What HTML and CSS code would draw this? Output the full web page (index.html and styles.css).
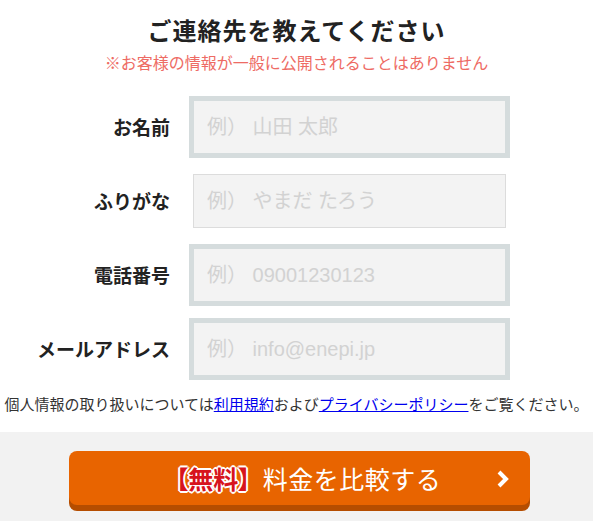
FILE: index.html
```
<!DOCTYPE HTML>
<html>
<head>
    <meta http-equiv="Content-Type" content="text/html;charset=UTF-8">
    <title>ご連絡先</title>
    <link rel="stylesheet" href="styles.css">
</head>
<body>
<div class="main">
    <h1 class="title">ご連絡先を教えてください</h1>
    <p class="note">※お客様の情報が一般に公開されることはありません</p>
    <div class="rows">
        <div class="row">
            <label class="label">お名前</label>
            <input class="field ring" type="text" placeholder="例） 山田 太郎">
        </div>
        <div class="row">
            <label class="label">ふりがな</label>
            <input class="field" type="text" placeholder="例） やまだ たろう">
        </div>
        <div class="row">
            <label class="label">電話番号</label>
            <input class="field ring" type="text" placeholder="例） 09001230123">
        </div>
        <div class="row">
            <label class="label">メールアドレス</label>
            <input class="field ring" type="text" placeholder="例） info@enepi.jp">
        </div>
    </div>
    <p class="policy">個人情報の取り扱いについては<a href="#">利用規約</a>および<a href="#">プライバシーポリシー</a>をご覧ください。</p>
    <div class="band">
        <div class="btn">
            <span class="free">【無料】</span><span class="btntext">料金を比較する</span>
            <svg class="arrow" width="14" height="20" viewBox="0 0 14 20">
                <polyline points="3,3 10,10 3,17" fill="none" stroke="#fff" stroke-width="4"/>
            </svg>
        </div>
    </div>
</div>
</body>
</html>
```

FILE: styles.css
```
* {
    margin: 0;
    padding: 0;
    box-sizing: border-box;
}

body {
    font-family: "Liberation Sans", "Noto Sans CJK JP", sans-serif;
    color: #222;
    background: #fff;
}

.main {
    width: 593px;
    height: 521px;
    overflow: hidden;
}

.title {
    padding-top: 14px;
    font-size: 24px;
    line-height: 36px;
    font-weight: bold;
    text-align: center;
    letter-spacing: 1px;
}

.note {
    margin-top: 2px;
    font-size: 16px;
    line-height: 24px;
    color: #ee6b64;
    text-align: center;
}

.rows {
    margin-top: 24px;
    display: flex;
    flex-direction: column;
    gap: 20px;
}

.row {
    display: flex;
    align-items: center;
    gap: 23px;
}

.label {
    width: 170px;
    text-align: right;
    font-size: 19px;
    font-weight: bold;
    color: #222;
    margin-top: -2px;
}

.field {
    width: 313px;
    height: 54px;
    padding-left: 13px;
    border: 1px solid #dcdcdc;
    background: #f3f3f3;
    font-family: "Liberation Sans", "Noto Sans CJK JP", sans-serif;
    font-size: 20px;
    color: #333;
    outline: none;
}

.field::placeholder {
    color: #d2d2d2;
}

.ring {
    border-color: #d5dcdd;
    box-shadow: 0 0 0 4px #d5dcdd;
}

.policy {
    margin-top: 17px;
    font-size: 15px;
    line-height: 24px;
    text-align: center;
    color: #333;
}

.policy a {
    color: #0000ee;
}

.band {
    margin-top: 15px;
    height: 100px;
    padding-top: 19px;
    background: #f2f2f2;
}

.btn {
    position: relative;
    margin-left: 69px;
    width: 461px;
    height: 54px;
    border-radius: 8px;
    background: #e86400;
    box-shadow: 0 6px 0 #b54d00;
    display: flex;
    align-items: center;
    justify-content: center;
    padding-left: 18px;
}

.free {
    font-size: 25px;
    font-weight: bold;
    color: #d7141d;
    font-feature-settings: "palt";
    margin-right: 12px;
    text-shadow: 1px 1px 0 #fff, -1px -1px 0 #fff, 1px -1px 0 #fff, -1px 1px 0 #fff, 0 2px 0 #fff, 0 -2px 0 #fff, 2px 0 0 #fff, -2px 0 0 #fff;
}

.btntext {
    font-size: 25px;
    color: #fff;
    letter-spacing: 0.5px;
}

.arrow {
    position: absolute;
    right: 20px;
    top: 18px;
}
```
